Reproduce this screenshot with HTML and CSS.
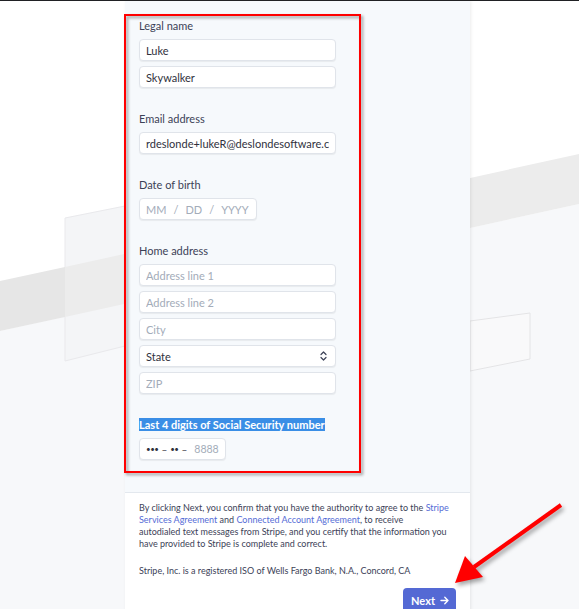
FILE: index.html
```html
<!DOCTYPE html>
<html lang="en">
<head>
<meta charset="UTF-8">
<title>Personal details</title>
<link rel="stylesheet" href="styles.css">
</head>
<body>
<svg class="backdrop" width="579" height="609" viewBox="0 0 579 609">
  <polygon points="0,330 579,203 579,609 0,609" fill="#f7f8fa"/>
  <polygon points="65,217 125,205 125,345 65,360" fill="#f4f5f7" stroke="#e9e9ec"/>
  <polygon points="0,280 65,266 65,316 0,330" fill="#e6e6e6"/>
  <polygon points="65,266 579,153 579,203 65,316" fill="#ececec"/>
  <polygon points="470,320 530,312 530,358 470,370" fill="#f9f9fa" stroke="#e4e4e6"/>
</svg>

<div class="page">
  <div class="panel">
    <form class="details">
      <div class="group">
        <label class="label">Legal name</label>
        <input class="field" type="text" value="Luke">
        <input class="field" type="text" value="Skywalker">
      </div>

      <div class="group">
        <label class="label">Email address</label>
        <input class="field" type="text" value="rdeslonde+lukeR@deslondesoftware.com">
      </div>

      <div class="group">
        <label class="label">Date of birth</label>
        <div class="field date">
          <span class="hint">MM</span>
          <span class="hint">/</span>
          <span class="hint">DD</span>
          <span class="hint">/</span>
          <span class="hint">YYYY</span>
        </div>
      </div>

      <div class="group">
        <label class="label">Home address</label>
        <input class="field" type="text" placeholder="Address line 1">
        <input class="field" type="text" placeholder="Address line 2">
        <input class="field" type="text" placeholder="City">
        <div class="field select">
          <span>State</span>
          <svg width="7" height="10" viewBox="0 0 7 10">
            <path d="M1 3.5 L3.5 1 L6 3.5 M1 6.5 L3.5 9 L6 6.5" fill="none" stroke="#3c4257" stroke-width="1.2" stroke-linecap="round" stroke-linejoin="round"/>
          </svg>
        </div>
        <input class="field" type="text" placeholder="ZIP">
      </div>

      <div class="group">
        <label class="label"><span class="selected">Last 4 digits of Social Security number</span></label>
        <div class="field ssn">
          <span class="dots">&bull;&bull;&bull;</span>
          <span>&ndash;</span>
          <span class="dots">&bull;&bull;</span>
          <span>&ndash;</span>
          <span class="hint">8888</span>
        </div>
      </div>
    </form>

    <div class="legal">
      <p>By clicking Next, you confirm that you have the authority to agree to the <a href="#">Stripe Services Agreement</a> and <a href="#">Connected Account Agreement</a>, to receive<br>autodialed text messages from Stripe, and you certify that the information you have provided to Stripe is complete and correct.</p>
      <p class="iso">Stripe, Inc. is a registered ISO of Wells Fargo Bank, N.A., Concord, CA</p>
      <div class="actions">
        <button class="next" type="button">Next
          <svg width="9" height="9" viewBox="0 0 9 9">
            <path d="M1 4.5 H8 M4.8 1.3 L8 4.5 L4.8 7.7" fill="none" stroke="#fff" stroke-width="1.4" stroke-linecap="round" stroke-linejoin="round"/>
          </svg>
        </button>
      </div>
    </div>
  </div>
</div>

<!-- screenshot annotations -->
<div class="callout"></div>
<svg class="pointer" width="579" height="609" viewBox="0 0 579 609">
  <line x1="561" y1="504" x2="474" y2="566" stroke="#ff0000" stroke-width="4"/>
  <polygon points="455,582 465,555 483,576" fill="#ff0000"/>
</svg>
</body>
</html>
```

FILE: styles.css
```css
* {
	margin: 0;
	padding: 0;
	box-sizing: border-box;
	}
body {
	position: relative;
	height: 609px;
	overflow: hidden;
	border-top: 1px solid #202124;
	background: #fff;
	font-family: Lato, "Liberation Sans", sans-serif;
	color: #3c4257;
	}
.backdrop {
	position: absolute;
	left: 0;
	top: 0;
	}
.page {
	position: relative;
	padding-left: 125px;
	}
.panel {
	width: 345px;
	min-height: 608px;
	background: #f6f9fc;
	box-shadow: 1px 0 3px rgba(0, 0, 0, 0.08);
	}

/* form */
.details {
	padding: 18px 14px 32px;
	}
	.group {
		display: flex;
		flex-direction: column;
		align-items: flex-start;
		}
	.group + .group {
		margin-top: 24px;
		}
	.label {
		font-size: 11px;
		line-height: 14px;
		color: #3c4257;
		margin-bottom: 6px;
		}
		.selected {
			background: #3a8ee6;
			color: #fff;
			font-weight: 700;
			}
	.field {
		display: flex;
		align-items: center;
		width: 197px;
		height: 22px;
		padding: 0 6px;
		border: 1px solid #e0e4ea;
		border-radius: 4px;
		background: #fff;
		box-shadow: 0 1px 1px rgba(0, 0, 0, 0.06);
		font-family: inherit;
		font-size: 11px;
		color: #30313d;
		outline: none;
		}
	.field + .field {
		margin-top: 5px;
		}
	.field::placeholder, .hint {
		color: #a3acb9;
		}
	.date {
		width: 118px;
		gap: 7px;
		}
	.select {
		justify-content: space-between;
		padding-right: 8px;
		}
	.ssn {
		width: 87px;
		gap: 3px;
		font-size: 10px;
		}
		.ssn .dots {
			font-size: 8px;
			letter-spacing: -0.5px;
			}
		.ssn .hint {
			margin-left: 4px;
			font-size: 10.5px;
			}

/* legal footer */
.legal {
	border-top: 1px solid #e3e8ee;
	background: #fff;
	padding: 9px 14px 0;
	font-size: 9px;
	line-height: 12px;
	color: #3c4257;
	}
	.legal a {
		color: #556cd6;
		text-decoration: none;
		}
	.iso {
		margin-top: 15px;
		}
	.actions {
		display: flex;
		justify-content: flex-end;
		margin-top: 11px;
		}
	.next {
		display: flex;
		align-items: center;
		gap: 5px;
		height: 24px;
		padding: 0 7px 0 8px;
		border: 0;
		border-radius: 4px;
		background: #5469d4;
		color: #fff;
		font-family: inherit;
		font-size: 11px;
		font-weight: 700;
		}

/* annotations drawn over the screenshot */
.callout {
	position: absolute;
	left: 124px;
	top: 13px;
	width: 237px;
	height: 459px;
	border: 2px solid #ff0000;
	filter: drop-shadow(2px 2px 1.5px rgba(0, 0, 0, 0.4));
	}
.pointer {
	position: absolute;
	left: 0;
	top: 0;
	filter: drop-shadow(2px 3px 2px rgba(0, 0, 0, 0.35));
	}
```
